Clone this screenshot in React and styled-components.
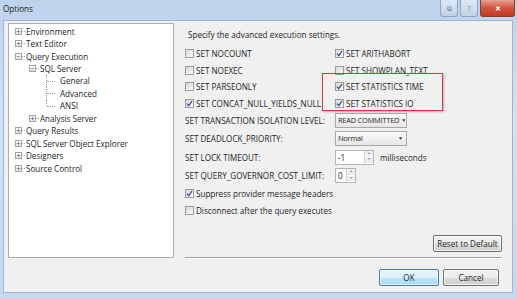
import styled, { createGlobalStyle } from "styled-components";

const GlobalStyle = createGlobalStyle`
    html, body {
        margin: 0;
        padding: 0;
        background: #c7d9ee;
    }
    body {
        font-family: "Open Sans", "Noto Sans", sans-serif;
        font-size: 8.1px;
        line-height: 11px;
        color: #1e1e1e;
    }
`

const tree = [
    { label: "Environment", depth: 0, toggle: "+" },
    { label: "Text Editor", depth: 0, toggle: "+" },
    { label: "Query Execution", depth: 0, toggle: "-" },
    { label: "SQL Server", depth: 1, toggle: "-" },
    { label: "General", depth: 2 },
    { label: "Advanced", depth: 2 },
    { label: "ANSI", depth: 2, last: true },
    { label: "Analysis Server", depth: 1, toggle: "+" },
    { label: "Query Results", depth: 0, toggle: "+" },
    { label: "SQL Server Object Explorer", depth: 0, toggle: "+" },
    { label: "Designers", depth: 0, toggle: "+" },
    { label: "Source Control", depth: 0, toggle: "+" },
]

const checks = [
    ["SET NOCOUNT", false, "SET ARITHABORT", true],
    ["SET NOEXEC", false, "SET SHOWPLAN_TEXT", false],
    ["SET PARSEONLY", false, "SET STATISTICS TIME", true],
    ["SET CONCAT_NULL_YIELDS_NULL", true, "SET STATISTICS IO", true],
]

const Check = ({ checked, children }) => (
    <CheckRow>
        <Box>
            {checked && (
                <svg width="7" height="7" viewBox="0 0 7 7">
                    <path d="M1 3.6 L2.8 5.6 L6 1" fill="none" stroke="#3b4f86" strokeWidth="1.3" />
                </svg>
            )}
        </Box>
        <span>{children}</span>
    </CheckRow>
)

const Spinner = () => (
    <Spin>
        <span>▲</span>
        <span>▼</span>
    </Spin>
)

const App = () => {
    return (
        <>
            <GlobalStyle />
            <Window>
                <TitleBar>
                    <Title>Options</Title>
                    <Caption>
                        <CapButton>⧉</CapButton>
                        <CapButton>?</CapButton>
                        <CloseButton>✕</CloseButton>
                    </Caption>
                </TitleBar>

                <Client>
                    <Main>
                        <Tree>
                            {tree.map((item) => (
                                <TreeRow key={item.label} depth={item.depth}>
                                    {item.toggle ? (
                                        <Toggle>{item.toggle === "+" ? "+" : "−"}</Toggle>
                                    ) : (
                                        <Branch last={item.last} />
                                    )}
                                    <TreeLabel>{item.label}</TreeLabel>
                                </TreeRow>
                            ))}
                        </Tree>

                        <Panel>
                            <Intro>Specify the advanced execution settings.</Intro>

                            <Grid>
                                {checks.map(([a, ac, b, bc]) => (
                                    <Pair key={a}>
                                        <Check checked={ac}>{a}</Check>
                                        <Check checked={bc}>{b}</Check>
                                    </Pair>
                                ))}
                                <Highlight />
                            </Grid>

                            <Form>
                                <FieldLabel>SET TRANSACTION ISOLATION LEVEL:</FieldLabel>
                                <Select>
                                    <SelectText>READ COMMITTED</SelectText>
                                    <Arrow>▼</Arrow>
                                </Select>

                                <FieldLabel>SET DEADLOCK_PRIORITY:</FieldLabel>
                                <Select>
                                    <SelectText>Normal</SelectText>
                                    <Arrow>▼</Arrow>
                                </Select>

                                <FieldLabel>SET LOCK TIMEOUT:</FieldLabel>
                                <Inline>
                                    <NumberBox width="39px">
                                        <span>-1</span>
                                        <Spinner />
                                    </NumberBox>
                                    <span>milliseconds</span>
                                </Inline>

                                <FieldLabel>SET QUERY_GOVERNOR_COST_LIMIT:</FieldLabel>
                                <Inline>
                                    <NumberBox width="21px">
                                        <span>0</span>
                                        <Spinner />
                                    </NumberBox>
                                </Inline>
                            </Form>

                            <Options>
                                <Check checked>Suppress provider message headers</Check>
                                <Check>Disconnect after the query executes</Check>
                            </Options>

                            <ResetRow>
                                <Button width="69px">Reset to Default</Button>
                            </ResetRow>
                            <Separator />
                        </Panel>
                    </Main>

                    <Footer>
                        <Button width="60px" primary>OK</Button>
                        <Button width="56px">Cancel</Button>
                    </Footer>
                </Client>
            </Window>
        </>
    )
}


const Window = styled.div`
    width: 517px;
    height: 299px;
    display: flex;
    flex-direction: column;
    background: linear-gradient(180deg, #bdd3ec 0%, #d3e2f3 40%, #c4d8ee 100%);
    box-sizing: border-box;
    padding: 0 4px 6px 3px;
`

const TitleBar = styled.div`
    height: 20px;
    flex: none;
    display: flex;
    align-items: flex-start;
    justify-content: space-between;
`

const Title = styled.div`
    color: #1a1a1a;
    padding: 3px 0 0 0;
`

const Caption = styled.div`
    display: flex;
    gap: 2px;
    margin-right: -2px;
`

const CapButton = styled.div`
    width: 16px;
    height: 16px;
    border: 1px solid #8ea6c2;
    border-top: none;
    border-radius: 0 0 3px 3px;
    background: linear-gradient(180deg, #dde8f4, #c2d3e6);
    color: #6b7f99;
    font-size: 7px;
    display: flex;
    align-items: center;
    justify-content: center;
`

const CloseButton = styled(CapButton)`
    width: 33px;
    border-color: #8d3a2e;
    background: linear-gradient(180deg, #e8a093 0%, #d0553d 50%, #c2391f 100%);
    color: #fff;
    font-weight: bold;
`

const Client = styled.div`
    flex: 1;
    background: #f0f0f0;
    border: 1px solid #9fb5cf;
    display: flex;
    flex-direction: column;
    padding: 2px 4px 0 4px;
`

const Main = styled.div`
    display: flex;
    gap: 11px;
    height: 236px;
`

const Tree = styled.div`
    width: 166px;
    height: 235px;
    box-sizing: border-box;
    background: #fff;
    border: 1px solid #acacac;
    padding: 1px 0 0 4px;
`

const TreeRow = styled.div`
    height: 12.45px;
    display: flex;
    align-items: center;
    padding-left: ${(p) => p.depth * 14}px;
`

const Toggle = styled.div`
    width: 7px;
    height: 7px;
    flex: none;
    box-sizing: border-box;
    border: 1px solid #a5a5a5;
    background: linear-gradient(180deg, #fff, #e2e2e2);
    color: #444;
    font-size: 7px;
    line-height: 5px;
    text-align: center;
    margin: 0 2px 0 2px;
    position: relative;

    &::after {
        content: "";
        position: absolute;
        left: 6px;
        top: 2px;
        width: 3px;
        border-top: 1px dotted #a0a0a0;
    }
`

const Branch = styled.div`
    width: 8px;
    height: ${(p) => (p.last ? "6px" : "12.45px")};
    align-self: flex-start;
    margin: 0 4px 0 5px;
    box-sizing: border-box;
    border-left: 1px dotted #a0a0a0;
    position: relative;

    &::after {
        content: "";
        position: absolute;
        left: 0;
        top: 6px;
        width: 8px;
        border-top: 1px dotted #a0a0a0;
    }
`

const TreeLabel = styled.span`
    color: #1e1e1e;
    margin-left: 2px;
    white-space: nowrap;
`

const Panel = styled.div`
    flex: 1;
    display: flex;
    flex-direction: column;
    padding-top: 6px;
    padding-right: 6px;
`

const Intro = styled.div`
    padding-left: 3px;
    margin-bottom: 8px;
`

const Grid = styled.div`
    display: flex;
    flex-direction: column;
    gap: 5.5px;
    position: relative;
`

const Pair = styled.div`
    display: grid;
    grid-template-columns: 150px 1fr;
`

const CheckRow = styled.div`
    display: flex;
    align-items: center;
    gap: 2px;
    height: 11px;
    white-space: nowrap;
    overflow: hidden;
`

const Box = styled.div`
    width: 9px;
    height: 9px;
    flex: none;
    box-sizing: border-box;
    border: 1px solid #9a9a9a;
    background: linear-gradient(135deg, #d8d8d8, #fbfbfb);
    display: flex;
    align-items: center;
    justify-content: center;
`

const Highlight = styled.div`
    position: absolute;
    left: 137px;
    top: 25px;
    width: 121px;
    height: 38px;
    border: 1.5px solid #d9343a;
    box-sizing: border-box;
    box-shadow: 1px 1px 2px rgba(0, 0, 0, 0.25);
`

const Form = styled.div`
    display: grid;
    grid-template-columns: 150px 1fr;
    row-gap: 3.5px;
    align-items: center;
    margin-top: 4px;
`

const FieldLabel = styled.div`
    white-space: nowrap;
`

const Select = styled.div`
    width: 72px;
    height: 15px;
    box-sizing: border-box;
    border: 1px solid #a8a8a8;
    background: linear-gradient(180deg, #fafafa, #e6e6e6);
    display: flex;
    align-items: center;
    justify-content: space-between;
    padding: 0 3px 0 2px;
`

const SelectText = styled.span`
    white-space: nowrap;
    font-size: 7.4px;
    letter-spacing: -0.2px;
`

const Arrow = styled.span`
    font-size: 5px;
    color: #333;
    flex: none;
    margin-left: 2px;
`

const Inline = styled.div`
    display: flex;
    align-items: center;
    gap: 6px;
`

const NumberBox = styled.div`
    width: ${(p) => p.width};
    height: 15px;
    box-sizing: border-box;
    border: 1px solid #b5b5b5;
    background: #fff;
    display: flex;
    align-items: center;
    justify-content: space-between;
    padding-left: 2px;
`

const Spin = styled.div`
    width: 8px;
    height: 13px;
    display: flex;
    flex-direction: column;
    border-left: 1px solid #d5d5d5;

    span {
        flex: 1;
        font-size: 3px;
        line-height: 3px;
        color: #777;
        display: flex;
        align-items: center;
        justify-content: center;
        background: #ececec;
        border-bottom: 1px solid #fff;
    }
`

const Options = styled.div`
    display: flex;
    flex-direction: column;
    gap: 6px;
    margin-top: 5px;
`

const ResetRow = styled.div`
    display: flex;
    justify-content: flex-end;
    margin-top: auto;
`

const Separator = styled.div`
    margin-top: 5px;
    border-top: 1px solid #a0a0a0;
    border-bottom: 1px solid #fff;
`

const Footer = styled.div`
    display: flex;
    justify-content: flex-end;
    gap: 4px;
    padding: 10px 9px 0 0;
`

const Button = styled.div`
    width: ${(p) => p.width};
    height: 17px;
    box-sizing: border-box;
    border: 1px solid ${(p) => (p.primary ? "#3c7fb1" : "#707070")};
    border-radius: 2px;
    background: ${(p) =>
        p.primary
            ? "linear-gradient(180deg, #eaf6fd 0%, #d9f0fc 50%, #bee6fd 51%, #a7d9f5 100%)"
            : "linear-gradient(180deg, #f2f2f2 0%, #ebebeb 50%, #dddddd 51%, #cfcfcf 100%)"};
    box-shadow: inset 0 0 0 1px rgba(255, 255, 255, 0.7);
    display: flex;
    align-items: center;
    justify-content: center;
    white-space: nowrap;
`

export default App;
